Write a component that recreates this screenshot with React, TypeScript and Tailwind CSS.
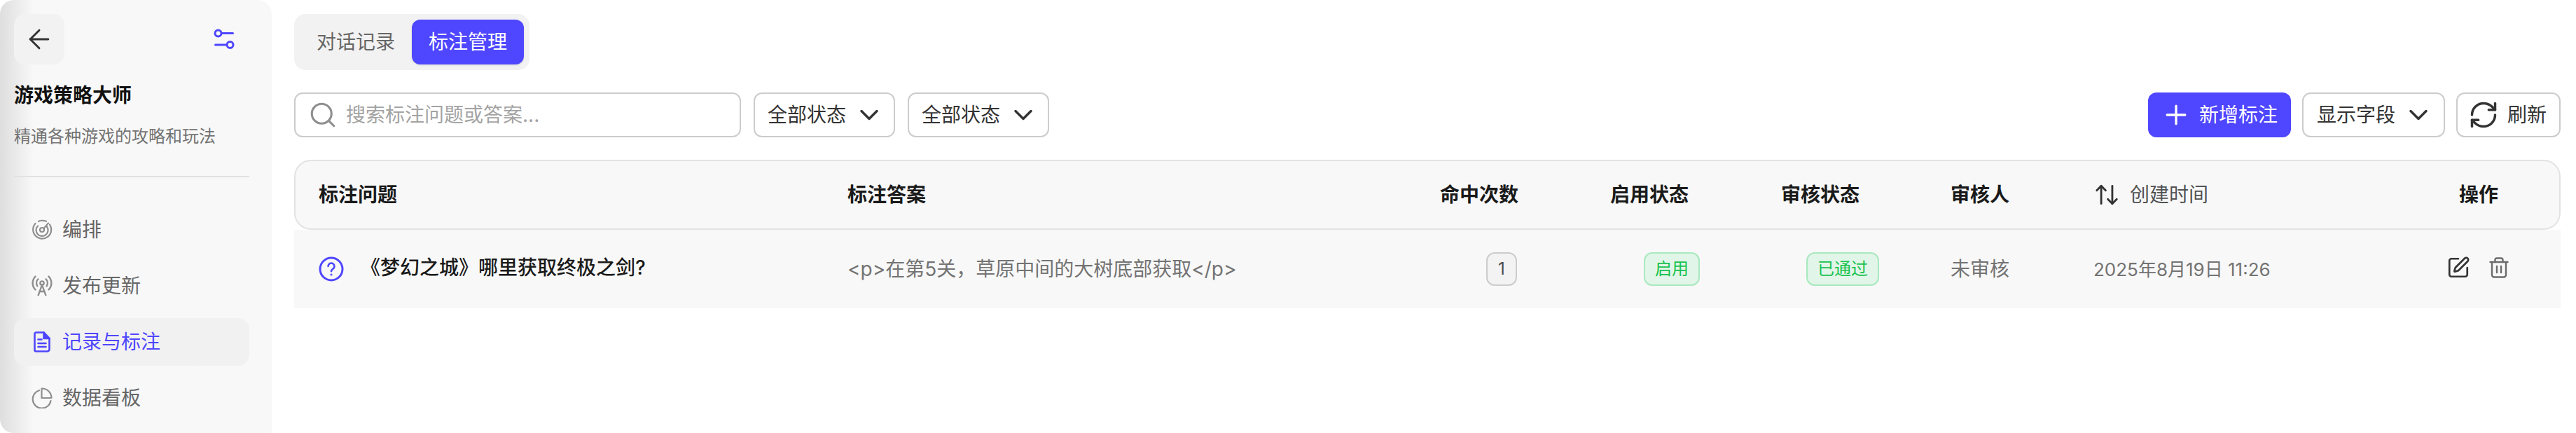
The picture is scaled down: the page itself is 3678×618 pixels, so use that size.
import { ArrowLeft, ArrowUpDown, ChevronDown, Plus, RadioTower, RefreshCw, Search, SquarePen } from "lucide-react"
import type { ReactNode } from "react"

const fontStack = "font-['Inter','Noto_Sans_CJK_SC',sans-serif]"

function SlidersIcon() {
  return (
    <svg width="30" height="30" viewBox="0 0 30 30" fill="none" stroke="#4f46ff" strokeWidth="3" strokeLinecap="round">
      <circle cx="6.5" cy="6.5" r="4.5" />
      <path d="M12 6.500h15.500" />
      <circle cx="23.500" cy="23" r="4.500" />
      <path d="M2.500 23H18" />
    </svg>
  )
}

function RadarIcon() {
  return (
    <svg width="30" height="30" viewBox="0 0 30 30" fill="none" stroke="#8f8f8f" strokeWidth="2.2" strokeLinecap="round">
      <path d="M10 3a13.500 13.500 0 0 1 11-.2" strokeDasharray="2 1.600" />
      <path d="M5.500 6A13 13 0 1 0 26 7.500" />
      <path d="M9 9.500a8.500 8.500 0 1 0 13 1" />
      <circle cx="15" cy="15" r="3" />
      <path d="M17.500 13 24 5.500" />
    </svg>
  )
}

function DocIcon() {
  return (
    <svg width="24" height="30" viewBox="0 0 24 30" fill="none" stroke="#4f46ff" strokeWidth="2.6" strokeLinejoin="round" strokeLinecap="round">
      <path d="M3.500 1.500h11l8 8.500v15.500a3 3 0 0 1-3 3h-16a2 2 0 0 1-2-2v-23a2 2 0 0 1 2-2Z" />
      <path d="M14.500 1.500V10h8" fill="#4f46ff" />
      <path d="M6.500 11.500h5M6.500 17h11M6.500 22h11" />
    </svg>
  )
}

function PieIcon() {
  return (
    <svg width="30" height="30" viewBox="0 0 30 30" fill="none" stroke="#8f8f8f" strokeWidth="2.2" strokeLinecap="round" strokeLinejoin="round">
      <path d="M11 4.200A13 13 0 1 0 27.500 19" />
      <path d="M14.500 1.500a13.500 13.500 0 0 1 14 13.500h-14Z" />
    </svg>
  )
}

function HelpIcon() {
  return (
    <svg width="36" height="36" viewBox="0 0 36 36" fill="none" stroke="#4f46ff" strokeWidth="3" strokeLinecap="round" className="shrink-0">
      <circle cx="18" cy="18" r="16" />
      <path d="M13.500 14a4.500 4.500 0 1 1 6.800 3.900c-1.400.9-2.300 1.700-2.300 3.400" strokeWidth="2.6" />
      <circle cx="18" cy="26" r="0.6" strokeWidth="2" />
    </svg>
  )
}

function TrashIcon() {
  return (
    <svg width="28" height="30" viewBox="0 0 28 30" fill="none" stroke="#6b6b6b" strokeWidth="2.4" strokeLinecap="round" strokeLinejoin="round">
      <path d="M1.500 7h25" />
      <path d="M8.500 7V4a2.500 2.500 0 0 1 2.500-2.500h6A2.500 2.500 0 0 1 19.500 4v3" />
      <path d="M4 7v18.500A3 3 0 0 0 7 28.500h14a3 3 0 0 0 3-3V7" />
      <path d="M11 13v9M17 13v9" />
    </svg>
  )
}

function NavItem({ icon, label, active }: { icon: ReactNode; label: string; active?: boolean }) {
  return (
    <div className={active ? "flex h-[68px] items-center rounded-2xl bg-[#f1f1f1] text-[#4f46ff]" : "flex h-[68px] items-center rounded-2xl text-[#666666]"}>
      <span className="flex w-[69px] shrink-0 justify-center pl-[11px]">{icon}</span>
      <span className="text-[28px] leading-9">{label}</span>
    </div>
  )
}

function Sidebar() {
  return (
    <aside className="h-[618px] w-[388px] shrink-0 rounded-t-[20px] rounded-bl-[20px] bg-linear-to-r from-[#dedede] to-[#f8f8f8] to-[48px] pl-5 pr-8 pt-5">
      <div className="flex items-start justify-between">
        <button className="flex h-[72px] w-[72px] items-center justify-center rounded-2xl bg-[#f2f2f2] text-[#333333]">
          <ArrowLeft size={44} strokeWidth={1.6} />
        </button>
        <span className="mr-[21px] mt-[21px]"><SlidersIcon /></span>
      </div>
      <h1 className="mt-[26px] text-[28px] font-semibold leading-9 text-[#111111]">游戏策略大师</h1>
      <p className="mt-[25px] text-2xl leading-8 text-[#737373]">精通各种游戏的攻略和玩法</p>
      <div className="mt-[40px] h-0.5 bg-[#e2e2e2]" />
      <nav className="mt-[41px] flex flex-col gap-3">
        <NavItem icon={<RadarIcon />} label="编排" />
        <NavItem icon={<RadioTower size={32} strokeWidth={1.8} className="text-[#8f8f8f]" />} label="发布更新" />
        <NavItem icon={<DocIcon />} label="记录与标注" active />
        <NavItem icon={<PieIcon />} label="数据看板" />
      </nav>
    </aside>
  )
}

function Dropdown({ label, wide }: { label: string; wide?: boolean }) {
  return (
    <button className={wide
      ? "flex h-16 items-center gap-[11px] rounded-xl border-2 border-[#cccccc] bg-white pl-[19px] pr-[14px] text-[28px] text-[#333333]"
      : "flex h-16 items-center gap-[11px] rounded-xl border-2 border-[#cccccc] bg-white pl-[18px] pr-[13px] text-[28px] text-[#333333]"}>
      {label}
      <ChevronDown size={44} strokeWidth={1.9} />
    </button>
  )
}

function Toolbar() {
  return (
    <div className="mt-8 flex items-center justify-between">
      <div className="flex items-center gap-[18px]">
        <div className="flex h-16 w-[638px] items-center gap-3 rounded-xl border-2 border-[#cccccc] bg-white pl-[18px]">
          <Search size={42} strokeWidth={1.8} className="text-[#8f8f8f]" />
          <span className="text-[28px] text-[#a3a3a3]">搜索标注问题或答案...</span>
        </div>
        <Dropdown label="全部状态" />
        <Dropdown label="全部状态" />
      </div>
      <div className="flex items-center gap-4">
        <button className="flex h-16 w-[204px] items-center gap-[11px] rounded-xl bg-[#4f46ff] pl-[18px] text-[28px] text-white">
          <Plus size={44} strokeWidth={1.8} />
          新增标注
        </button>
        <Dropdown label="显示字段" wide />
        <button className="flex h-16 items-center gap-3 rounded-xl border-2 border-[#cccccc] bg-white pl-[15px] pr-[18px] text-[28px] text-[#333333]">
          <RefreshCw size={44} strokeWidth={1.9} />
          刷新
        </button>
      </div>
    </div>
  )
}

const columns = "grid grid-cols-[755px_846px_243px_244px_242px_204px_1fr] items-center pl-[33px]"

function AnnotationTable() {
  return (
    <div className="mt-8">
      <div className={`${columns} h-[100px] rounded-3xl border-2 border-[#e3e3e3] bg-[#f8f8f8] text-[28px] font-semibold text-[#1a1a1a]`}>
        <span>标注问题</span>
        <span>标注答案</span>
        <span>命中次数</span>
        <span>启用状态</span>
        <span>审核状态</span>
        <span>审核人</span>
        <div className="flex items-center">
          <ArrowUpDown size={38} strokeWidth={1.8} className="text-[#333333]" />
          <span className="ml-[14px] font-normal text-[#525252]">创建时间</span>
          <span className="ml-[358px]">操作</span>
        </div>
      </div>
      <div className={`${columns} h-[112px] bg-[#f8f8f8] pl-[35px] text-[28px] text-[#737373]`}>
        <div className="flex items-center gap-[24px] -mt-px">
          <HelpIcon />
          <span className="-mt-1 font-medium text-[#1a1a1a]">《梦幻之城》哪里获取终极之剑?</span>
        </div>
        <span className="-mt-px">&lt;p&gt;在第5关，草原中间的大树底部获取&lt;/p&gt;</span>
        <span className="ml-[66px] flex h-12 w-[44px] items-center justify-center rounded-xl border-2 border-[#cccccc] bg-[#f3f3f3] text-2xl text-[#4a4a4a]">1</span>
        <span className="ml-[48px] flex h-12 w-20 items-center justify-center rounded-xl border-2 border-[#a9e9bf] bg-[#e1f5e8] text-2xl text-[#16c24f]">启用</span>
        <span className="ml-[36px] flex h-12 w-[104px] items-center justify-center rounded-xl border-2 border-[#a9e9bf] bg-[#e1f5e8] text-2xl text-[#16c24f]">已通过</span>
        <span>未审核</span>
        <div className="flex items-center">
          <span className="w-[505px] text-[26px]">2025年8月19日 11:26</span>
          <div className="flex items-center gap-[27px] -mt-1 -ml-px">
            <SquarePen size={34} strokeWidth={1.9} className="text-[#333333]" />
            <TrashIcon />
          </div>
        </div>
      </div>
    </div>
  )
}

export default function App() {
  return (
    <div className={`flex h-[618px] w-[3678px] overflow-hidden bg-white ${fontStack}`}>
      <Sidebar />
      <main className="flex-1 pl-8 pr-[22px] pt-5">
        <div className="flex w-fit rounded-2xl bg-[#f2f2f2] p-2 text-[28px]">
          <button className="flex h-16 w-40 items-center justify-center text-[#666666]">对话记录</button>
          <button className="flex h-16 w-40 items-center justify-center rounded-xl bg-[#4f46ff] text-white shadow-sm">标注管理</button>
        </div>
        <Toolbar />
        <AnnotationTable />
      </main>
    </div>
  )
}
